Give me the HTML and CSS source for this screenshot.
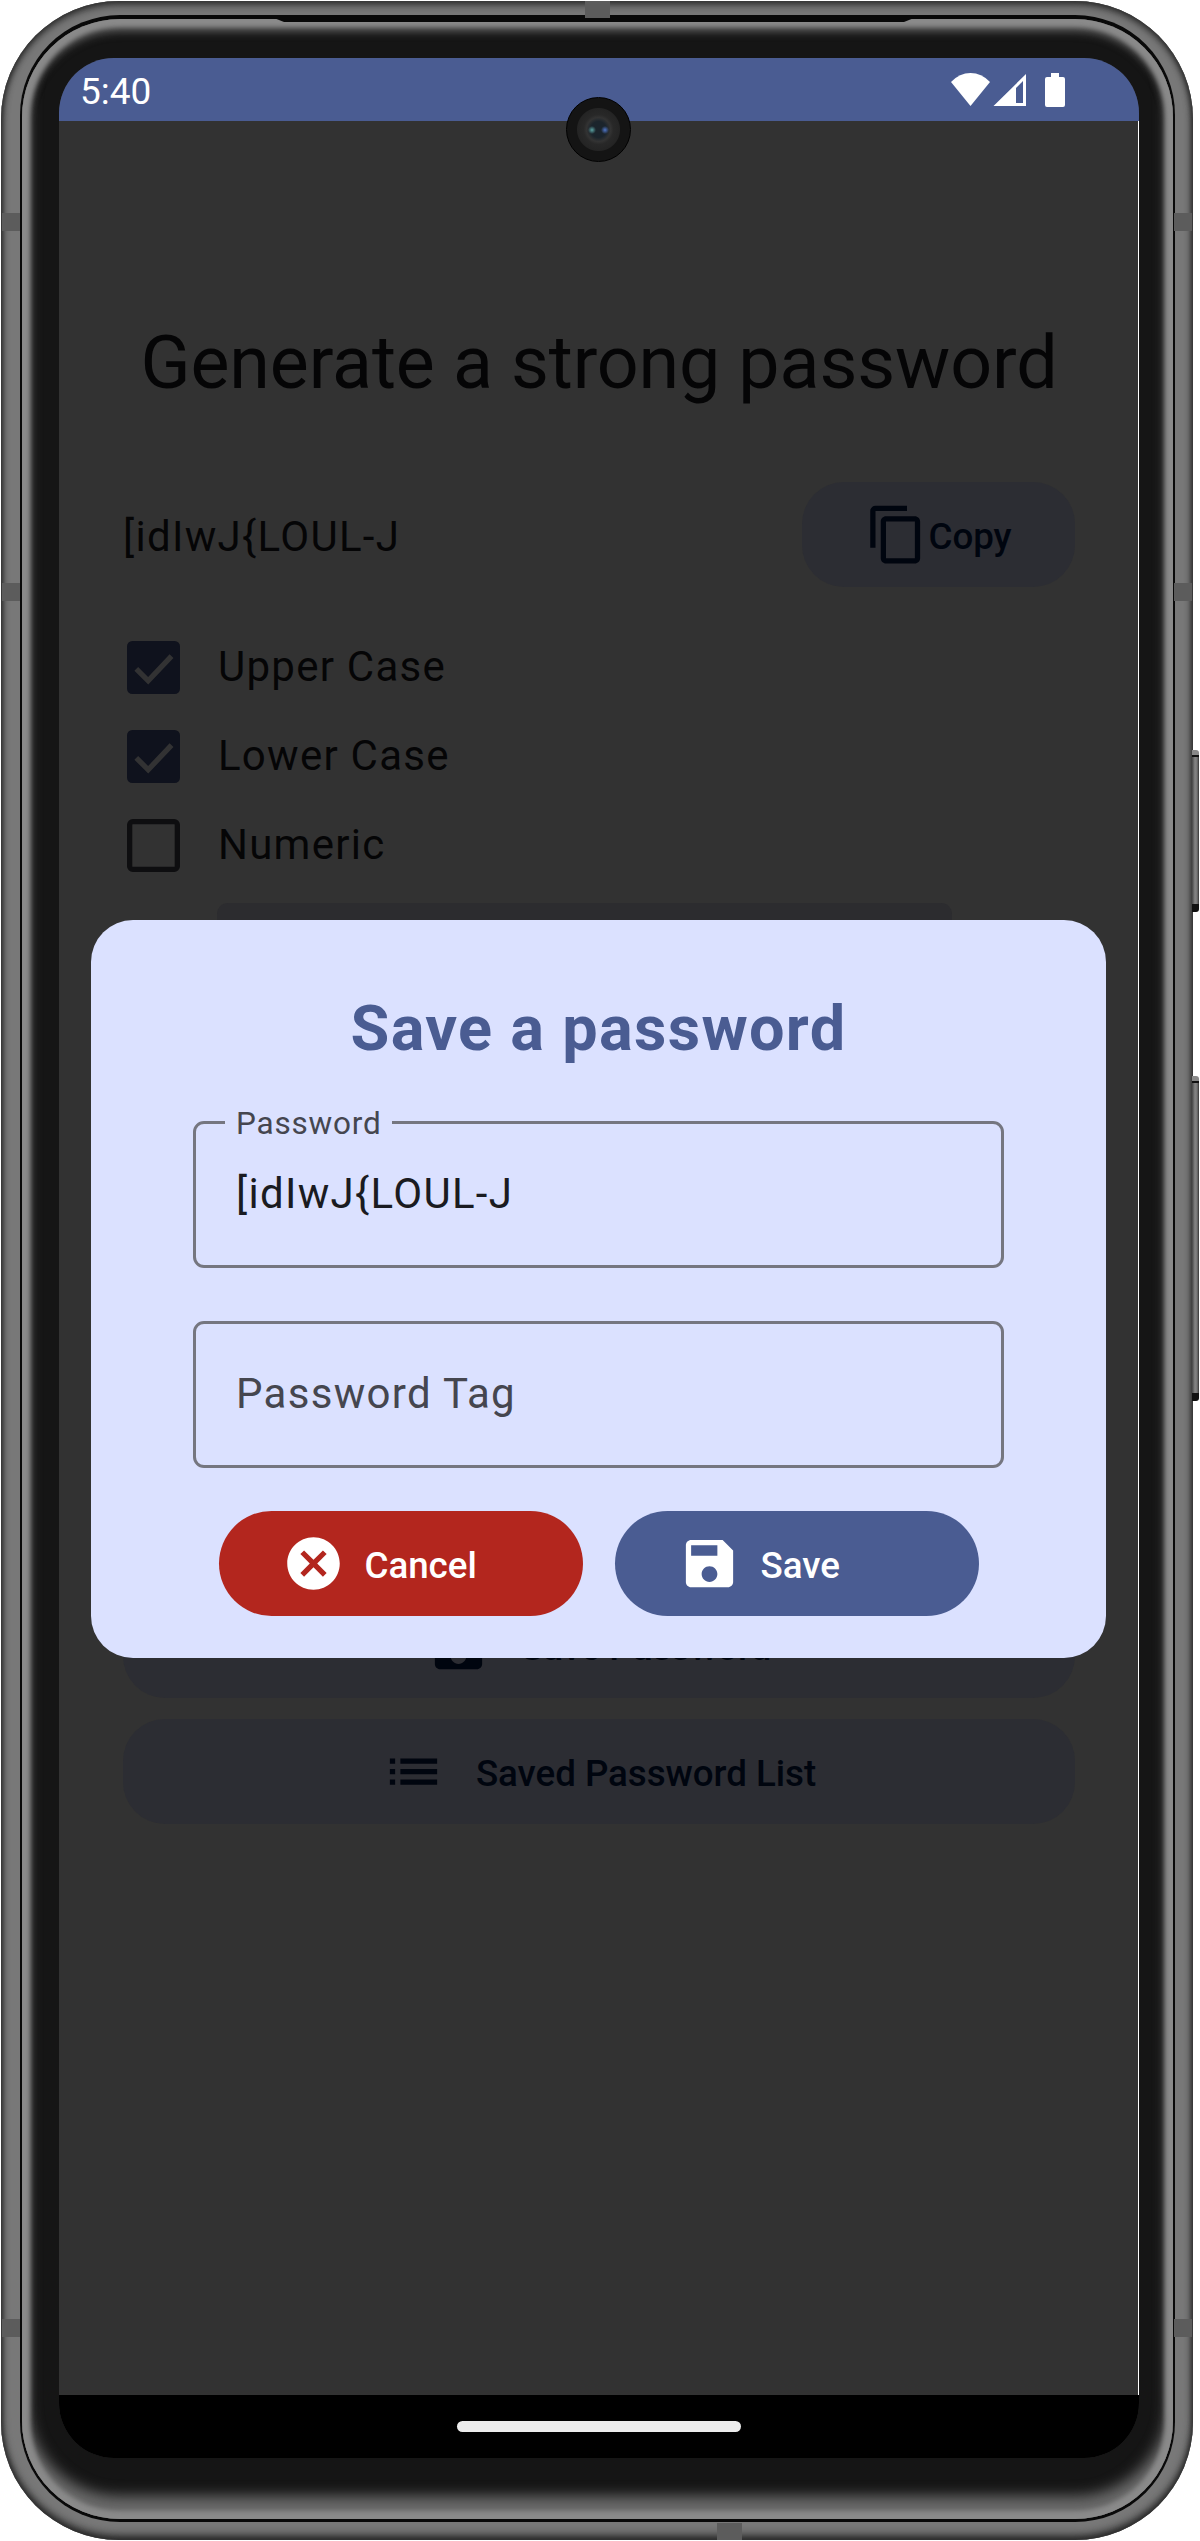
FILE: index.html
```
<!DOCTYPE html>
<html lang="en">
<head>
<meta charset="utf-8">
<title>Password generator</title>
<link rel="stylesheet" href="styles.css">
</head>
<body>
<svg class="symbols" aria-hidden="true">
  <symbol id="save" viewBox="0 0 24 24"><path d="M17 3H5c-1.11 0-2 .9-2 2v14c0 1.1.89 2 2 2h14c1.1 0 2-.9 2-2V7l-4-4zm-5 16c-1.66 0-3-1.34-3-3s1.34-3 3-3 3 1.34 3 3-1.34 3-3 3zm3-10H5V5h10v4z"/></symbol>
  <symbol id="copy" viewBox="0 0 24 24"><path d="M16 1H4c-1.1 0-2 .9-2 2v14h2V3h12V1zm3 4H8c-1.1 0-2 .9-2 2v14c0 1.1.9 2 2 2h11c1.1 0 2-.9 2-2V7c0-1.1-.9-2-2-2zm0 16H8V7h11v14z"/></symbol>
  <symbol id="list" viewBox="0 0 24 24"><path d="M3 13h2v-2H3v2zm0 4h2v-2H3v2zm0-8h2V7H3v2zm4 4h14v-2H7v2zm0 4h14v-2H7v2zM7 7v2h14V7H7z"/></symbol>
  <symbol id="cancel" viewBox="0 0 24 24"><path d="M12 2C6.47 2 2 6.47 2 12s4.47 10 10 10 10-4.47 10-10S17.53 2 12 2zm5 13.59L15.59 17 12 13.41 8.41 17 7 15.59 10.59 12 7 8.41 8.41 7 12 10.59 15.59 7 17 8.41 13.41 12 17 15.59z"/></symbol>
</svg>
<div class="device">
  <span class="band side left b1"></span><span class="band side left b2"></span><span class="band side left b3"></span>
  <span class="band side right b1"></span><span class="band side right b2"></span><span class="band side right b3"></span>
  <span class="band flat top"></span><span class="band flat bottom"></span>
  <span class="key power"></span><span class="key volume"></span>
  <div class="seam">
    <div class="bezel">
      <span class="speaker"></span>
      <div class="screen">
        <header class="status">
          <span class="time">5:40</span>
          <svg class="status-icons" viewBox="0 0 116 34">
            <path d="M0 9Q8.500 0 19.500 0T39 9L19.500 33z"/>
            <path fill-rule="evenodd" d="M42.500 33L75 1V33zM65 15V30H72V8z"/>
            <path d="M100 0h8v4h4a2 2 0 0 1 2 2V32a2 2 0 0 1-2 2H96a2 2 0 0 1-2-2V6a2 2 0 0 1 2-2h4z"/>
          </svg>
        </header>
        <main class="app">
          <h1 class="heading">Generate a strong password</h1>
          <div class="result">
            <span class="body-text">[idIwJ{LOUL-J</span>
            <button class="tonal copy"><svg class="icon"><use href="#copy"/></svg><span class="caption">Copy</span></button>
          </div>
          <div class="options">
            <label class="option"><svg class="box on" viewBox="0 0 20 20"><rect width="20" height="20" rx="2"/><path d="M3.500 10.500L8 15 16.800 5.700"/></svg><span>Upper Case</span></label>
            <label class="option"><svg class="box on" viewBox="0 0 20 20"><rect width="20" height="20" rx="2"/><path d="M3.500 10.500L8 15 16.800 5.700"/></svg><span>Lower Case</span></label>
            <label class="option"><svg class="box" viewBox="0 0 20 20"><rect x="1" y="1" width="18" height="18" rx="1.200"/></svg><span>Numeric</span></label>
          </div>
          <div class="length"></div>
          <div class="actions">
            <button class="tonal"><svg class="icon"><use href="#save"/></svg><span class="caption">Save Password</span></button>
            <button class="tonal"><svg class="icon"><use href="#list"/></svg><span class="caption">Saved Password List</span></button>
          </div>
        </main>
        <footer class="nav"><span class="pill"></span></footer>
        <section class="dialog">
          <h2 class="dialog-title">Save a password</h2>
          <div class="field filled"><span class="field-label">Password</span><span class="field-value">[idIwJ{LOUL-J</span></div>
          <div class="field"><span class="placeholder">Password Tag</span></div>
          <div class="dialog-actions">
            <button class="solid danger"><svg class="icon"><use href="#cancel"/></svg><span class="caption">Cancel</span></button>
            <button class="solid"><svg class="icon"><use href="#save"/></svg><span class="caption">Save</span></button>
          </div>
        </section>
        <span class="camera"></span>
      </div>
    </div>
  </div>
</div>
</body>
</html>
```

FILE: styles.css
```
* { box-sizing: border-box; }
body { margin: 0; padding: 1px 0 0 1px; height: 2541px; overflow: hidden; background: #fff; font-family: Roboto, "Liberation Sans", sans-serif; }
h1, h2 { margin: 0; font-weight: 400; }
button { border: 0; font: 500 36.75px/52px Roboto, sans-serif; letter-spacing: -.05px; padding: 0; display: flex; align-items: center; }
.symbols { position: absolute; width: 0; height: 0; }
.icon { width: 63px; height: 63px; fill: currentColor; flex: none; }
.caption { padding-top: 4px; }

.device { position: relative; width: 1192px; height: 2539px; padding: 14px 18px 18px 19px; border-radius: 118px; background: #787878; box-shadow: inset 0 0 4px 1px #2c2c2c, inset 0 5px 7px #444, inset 0 -5px 9px #2c2c2c; }
.band { position: absolute; background: #5c5c5c; }
.side { width: 18px; height: 18px; }
.left { left: 1px; }
.right { right: 1px; }
.b1 { top: 212px; }
.b2 { top: 582px; }
.b3 { top: 2318px; }
.flat { width: 25px; height: 17px; }
.flat.top { left: 584px; top: 0; }
.flat.bottom { left: 716px; bottom: 0; }
.key { position: absolute; left: 1191px; width: 7px; border-radius: 0 3px 3px 0; background: linear-gradient(#888 5px, #111 5px 7px, transparent 7px calc(100% - 8px), #111 calc(100% - 8px)), linear-gradient(90deg, #444, #858585 3px, #777 5px, #333); }
.power { top: 749px; height: 162px; }
.volume { top: 1075px; height: 325px; }
.seam { height: 100%; padding: 4px 2px 3px; border-radius: 100px; background: #090909; }
.bezel { position: relative; height: 100%; padding: 39px 34px 61px 37px; border-radius: 98px; background: #151515; box-shadow: inset 0 0 4px 8px #8a8a8a, inset 0 9px 8px 4px #555, inset 0 -17px 14px 6px #6a6a6a, inset 0 0 10px 6px #3a3a3a; }
.speaker { position: absolute; left: 252px; top: -1px; width: 640px; height: 4px; background: #090909; clip-path: polygon(0 0, 100% 0, calc(100% - 10px) 100%, 10px 100%); }
.screen { position: relative; width: 1080px; height: 2400px; border-radius: 55px; overflow: hidden; display: flex; flex-direction: column; background: #323232; }

.status { height: 63px; flex: none; padding: 0 72px 0 21px; display: flex; justify-content: space-between; align-items: center; background: #4a5c92; color: #fff; }
.time { font-size: 37px; padding-top: 3px; }
.status-icons { width: 116px; height: 34px; fill: #fff; }

.app { flex: 1; padding: 190px 63px 0 64px; border-right: 1px solid #fff; color: #050506; }
.heading { font-size: 73.5px; line-height: 105px; letter-spacing: -.1px; text-align: center; white-space: nowrap; margin: 0 -20px; }
.result { display: flex; justify-content: space-between; align-items: center; margin-top: 66px; height: 105px; }
.body-text { font-size: 42px; line-height: 63px; letter-spacing: 1.31px; padding-top: 3px; }
.tonal { height: 105px; border-radius: 42px; background: #2c2d33; color: #00050f; justify-content: center; }
.copy { width: 273px; }
.options { margin-top: 36px; }
.option { display: flex; align-items: center; height: 89px; padding-left: 4px; gap: 38px; font-size: 42px; letter-spacing: 1.25px; }
.option span { padding-bottom: 2px; }
.box { width: 53px; height: 53px; fill: none; stroke: #0e0e10; stroke-width: 2; }
.box.on rect { fill: #0f121d; stroke: none; }
.box.on path { stroke: #323233; }
.length { width: 735px; height: 147px; margin: 13px 0 0 94px; border-radius: 11px 11px 0 0; background: #2c2c2f; }
.actions { display: flex; flex-direction: column; gap: 21px; margin-top: 543px; }
.actions .icon { margin-right: 31px; }

.nav { height: 63px; flex: none; background: #000; display: flex; align-items: center; justify-content: center; }
.pill { width: 284px; height: 11px; border-radius: 6px; background: #ececec; }

.dialog { position: absolute; left: 32px; top: 862px; width: 1015px; height: 738px; border-radius: 42px; padding: 68px 102px 42px; background: #dbe1ff; }
.dialog-title { font-size: 63px; line-height: 82px; font-weight: 700; letter-spacing: 1.31px; color: #4a5c92; text-align: center; }
.field { position: relative; height: 147px; margin-top: 51px; border: 3px solid #757680; border-radius: 11px; padding: 0 40px 2px; display: flex; align-items: center; font-size: 42px; letter-spacing: 1.31px; color: #45464f; }
.field + .field { margin-top: 53px; }
.field-label { position: absolute; left: 29px; top: -19px; padding: 0 10px 0 11px; font-size: 31.5px; line-height: 37px; letter-spacing: .8px; background: #dbe1ff; }
.field-value { color: #1a1b21; }
.dialog-actions { display: flex; justify-content: center; gap: 32px; margin-top: 43px; }
.solid { width: 364px; height: 105px; border-radius: 53px; padding-left: 63px; color: #fff; background: #4a5c92; }
.danger { background: #b3261e; }
.solid .icon { margin-right: 20px; }

.camera { position: absolute; left: 507px; top: 39px; width: 65px; height: 65px; border-radius: 50%; border: 1px solid #000; background: radial-gradient(circle 4px at 25px 32px, #5ba3a3, transparent 4px), radial-gradient(circle 4px at 38px 32px, #5076c8, transparent 4px), radial-gradient(circle, #1b242c 8px, #333 12px, #282828 15px, #242424 21px, #141414 22px); }
```
